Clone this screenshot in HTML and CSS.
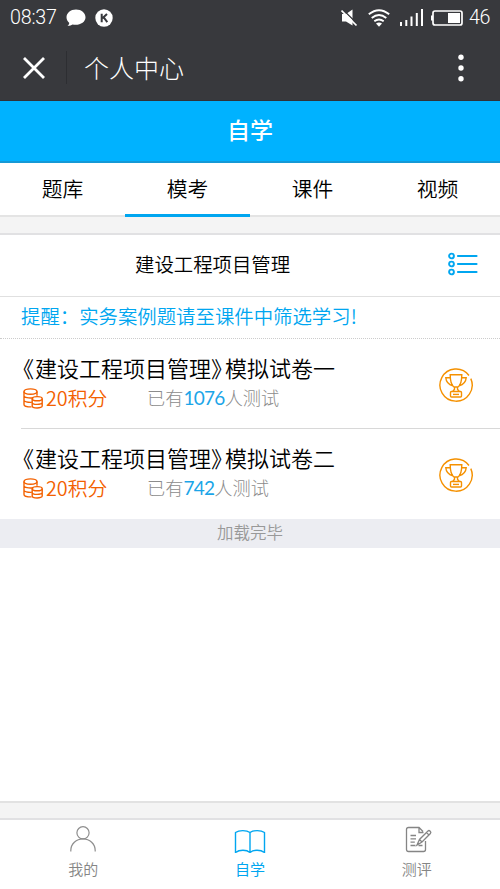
FILE: index.html
```html
<!DOCTYPE html>
<html lang="zh-CN">
<head>
<meta charset="utf-8">
<title>自学</title>
<link rel="stylesheet" href="styles.css">
</head>
<body>
<div class="status">
  <span class="clock">08:37</span>
  <svg class="bubble" width="20" height="18" viewBox="0 0 20 18"><path d="M10 .5C4.600.5.5 4 .5 8.300c0 2.500 1.200 4.300 2.800 5.600-.2 1.200-.9 2.200-1.800 2.900 2 .1 3.800-.5 5-1.300 6.600 1.400 13-1.800 13-7.200C19.500 4 15.400.5 10 .5z" fill="#fff"/></svg>
  <svg class="kbadge" width="18" height="18" viewBox="0 0 18 18"><circle cx="9" cy="9" r="8.700" fill="#fff"/><path d="M6.700 4.800v8.400M12 5l-4.600 4.300M8.500 8.200l3.800 5" stroke="#38393d" stroke-width="2" fill="none"/></svg>
  <svg class="mute" width="17" height="18" viewBox="0 0 17 18"><path d="M1 5h4L11.500 .5v16L5 12.500H1z" fill="#fff"/><path d="M1.500 .3L17 15.500" stroke="#38393d" stroke-width="1.300"/><path d="M.5 1.500L15.500 16.500" stroke="#fff" stroke-width="1.700"/></svg>
  <svg class="wifi" width="22" height="18" viewBox="0 0 22 18" fill="none" stroke="#fff" stroke-width="1.900"><path d="M.8 5.300Q11-3 21.200 5.300M3.700 8.900q7.300-5.700 14.600 0M6.300 12.300q4.700-3.600 9.400 0"/><path d="M8 14.500q3-2 6 0L11 17.700z" fill="#fff" stroke="none"/></svg>
  <svg class="signal" width="24" height="18" viewBox="0 0 24 18" fill="#fff"><path d="M0 13h2v4H0zM5.300 11h2v6h-2zM10.500 7.500h2V17h-2zM15.800 4h2v13h-2zM21 0h2v17h-2z"/></svg>
  <svg class="battery" width="32" height="18" viewBox="0 0 32 18"><rect x="2" y="2" width="29" height="14" rx="2" fill="none" stroke="#fff" stroke-width="1.700"/><path d="M0 6.500h2v5H0zM17 4h12v10H17z" fill="#fff"/></svg>
  <span class="level">46</span>
</div>
<div class="nav">
  <svg class="close" width="22" height="22" viewBox="0 0 22 22"><path d="M1 1l20 20M21 1L1 21" stroke="#fff" stroke-width="2.800"/></svg>
  <span class="nav-title">个人中心</span>
  <svg class="more" width="6" height="28" viewBox="0 0 6 28" fill="#fff"><circle cx="3" cy="3.300" r="2.700"/><circle cx="3" cy="14" r="2.700"/><circle cx="3" cy="24.700" r="2.700"/></svg>
</div>
<h1 class="header">自学</h1>
<div class="tabs">
  <span class="tab">题库</span><span class="tab active">模考</span><span class="tab">课件</span><span class="tab">视频</span>
</div>
<div class="gap"></div>
<div class="subject">
  <span class="subject-name">建设工程项目管理</span>
  <svg class="list" width="30" height="24" viewBox="0 0 30 24" fill="none" stroke="#00a6f0" stroke-width="1.900"><circle cx="3.500" cy="4" r="2.400"/><circle cx="3.500" cy="12" r="2.400"/><circle cx="3.500" cy="20" r="2.400"/><path d="M10 4h18.500M10 12h18.500M10 20h18.500" stroke-width="2.200" stroke-linecap="round"/></svg>
</div>
<div class="notice">提醒：实务案例题请至课件中筛选学习!</div>
<div class="paper">
  <div class="paper-text">
    <div class="paper-name"><span class="open">《</span>建设工程项目管理<span class="shut">》</span>模拟试卷一</div>
    <div class="meta">
      <svg class="coins" width="20" height="21" viewBox="0 0 20 21"><use href="#coins"/></svg>
      <span class="points">20积分</span>
      <span class="count">已有<b>1076</b>人测试</span>
    </div>
  </div>
  <svg class="cup" width="34" height="34" viewBox="0 0 34 34"><use href="#cup"/></svg>
</div>
<div class="paper">
  <div class="paper-text">
    <div class="paper-name"><span class="open">《</span>建设工程项目管理<span class="shut">》</span>模拟试卷二</div>
    <div class="meta">
      <svg class="coins" width="20" height="21" viewBox="0 0 20 21"><use href="#coins"/></svg>
      <span class="points">20积分</span>
      <span class="count">已有<b>742</b>人测试</span>
    </div>
  </div>
  <svg class="cup" width="34" height="34" viewBox="0 0 34 34"><use href="#cup"/></svg>
</div>
<div class="loaded">加载完毕</div>
<div class="blank"></div>
<div class="gap bottom-gap"></div>
<div class="tabbar">
  <div class="item">
    <svg width="28" height="28" viewBox="0 0 28 28" fill="none" stroke="#8e8e8e" stroke-width="1.200"><circle cx="14" cy="7.800" r="6.100"/><path d="M1.800 26.500v-1c0-6.500 5.400-11.600 12.200-11.600s12.200 5.100 12.200 11.600v1"/></svg>
    <span>我的</span>
  </div>
  <div class="item on">
    <svg width="32" height="28" viewBox="0 0 32 28" fill="none" stroke="#00a6f0" stroke-width="1.400"><path d="M16 27.500V7.500C12.500 5 5 5 1.500 7.500v20c4-3 11-3 14.500 0zM16 27.500V7.500C19.500 5 27 5 30.500 7.500v20c-4-3-11-3-14.500 0z"/></svg>
    <span>自学</span>
  </div>
  <div class="item">
    <svg class="exam" width="28" height="28" viewBox="0 0 28 28" fill="none" stroke="#858585" stroke-width="1.300"><path d="M20.500 16v8.500q0 2-2 2h-15q-2 0-2-2v-20q0-2 2-2H14l4 4M14 2.500v5h4.500"/><path d="M5.500 10.500H11M5.500 13.800H11M5.500 17.200h4.300M5.500 20.500h5M13.500 20.500h4"/><path d="M12 20l2.500-5.500L23 6q1-1 2.200.2t.2 2.300L17 17zM14.500 14.500L17 17M21.500 7.500l2.300 2.400"/></svg>
    <span>测评</span>
  </div>
</div>
<svg class="defs" width="0" height="0">
  <defs>
    <g id="coins" fill="none" stroke="#f36100" stroke-width="1.400">
      <ellipse cx="7.500" cy="3.600" rx="6.500" ry="2.700"/>
      <path d="M1 3.600v12.800c0 1.500 3 2.500 7.500 2.500M14 3.600v4.200M1 7.700c0 1.700 5 2.800 9.500 2M1 12.200c0 1.400 3.500 2.300 7.800 2.100"/>
      <ellipse cx="14.200" cy="10.700" rx="5" ry="2.100"/>
      <path d="M9.200 10.700v7.300c0 2.600 10 2.600 10 0v-7.300M9.200 14.400c0 2.600 10 2.600 10 0"/>
    </g>
    <g id="cup" fill="none" stroke="#f59100" stroke-width="1.400">
      <path d="M30 7.500A16.100 16.100 0 1 0 31.800 10.600"/>
      <path d="M11.200 6.800h11.600q0 9.500-3.800 12.200h-4Q11.200 16.300 11.200 6.800zM11.300 9.800H6.800q.5 6.300 7 8M22.700 9.800h4.500q-.5 6.300-7 8M15.500 19v2.200l-1.700 2.300M18.500 19v2.200l1.700 2.300"/>
      <rect x="11.500" y="23.500" width="11" height="5.500" rx="1"/><path d="M14 26.400h6"/>
    </g>
  </defs>
</svg>
</body>
</html>
```
FILE: styles.css
```css
* { box-sizing: border-box; }
body {
  margin: 0; width: 500px; height: 889px; overflow: hidden;
  display: flex; flex-direction: column;
  background: #fff; color: #000;
  font-family: "Noto Sans CJK SC", sans-serif; font-weight: 350;
}
svg { display: block; flex: none; }
.status {
  height: 35px; flex: none; background: #38393d; color: #fff;
  display: flex; align-items: center;
  font: 300 19.700px/35px Roboto, sans-serif;
  padding: 0 10px 0 10px;
}
.clock { width: 56px; letter-spacing: -.2px; }
.kbadge { margin-left: 9px; }
.mute { margin-left: auto; }
.wifi { margin-left: 10px; }
.signal { margin-left: 10px; }
.battery { margin-left: 7px; }
.level { margin-left: 6px; width: 21px; letter-spacing: -.4px; }
.nav {
  height: 66px; flex: none; background: #38393d; color: #fff;
  display: flex; align-items: center; padding: 0 36px 0 23px;
  border-bottom: 1px solid #303238;
}
.nav-title {
  height: 33px; line-height: 32px; font-size: 25px; font-weight: 300;
  margin-left: 21px; padding-left: 17px; border-left: 1px solid #2d2e32;
}
.more { margin-left: auto; }
.header {
  margin: 0; height: 62px; flex: none; background: #00b2ff; color: #fff;
  border-bottom: 2px solid #1599d6;
  font-size: 23px; line-height: 57px; font-weight: 500; text-align: center;
}
.tabs { display: flex; height: 54px; flex: none; }
.tab {
  flex: 1; text-align: center; font-size: 20.800px; line-height: 50px;
  border-bottom: 2px solid #e4e4e4;
}
.tab.active { border-bottom: 3px solid #00a6f0; }
.gap { height: 18px; flex: none; background: #f4f4f4; border-bottom: 2px solid #e1e1e3; }
.subject {
  height: 62px; flex: none; display: flex; align-items: flex-start;
  border-bottom: 1px solid #e0e0e0; padding: 0 22px 0 135px;
}
.subject-name { font-size: 19.400px; line-height: 57px; }
.list { margin-left: auto; margin-top: 17px; }
.notice {
  height: 42px; flex: none; padding-left: 21px; color: #00a6f0;
  font-size: 19.400px; line-height: 38px; white-space: nowrap;
  border-bottom: 1px dotted #ccc;
}
.paper {
  height: 90px; flex: none; margin-left: 21px; padding: 12px 27px 0 0;
  display: flex; justify-content: space-between;
  border-bottom: 1px solid #d8d8d8;
}
.paper + .paper { border-bottom: 0; }
.paper-name { font-size: 22px; line-height: 32px; height: 32px; white-space: nowrap; }
.open, .shut { font-feature-settings: "halt"; margin-right: 3px; }
.open { margin-left: 2px; margin-right: 1px; }
.meta { display: flex; height: 30px; line-height: 28px; align-items: center; }
.coins { margin-left: 2px; }
.points { color: #f36100; font-size: 19.800px; margin-left: 3px; width: 101px; }
.count { color: #8c8c8c; font-size: 18.200px; font-weight: 300; white-space: nowrap; margin-top: -2px; }
.count b { font: 400 19px/1 Lato, sans-serif; color: #1ba5e8; letter-spacing: -.7px; }
.cup { margin-top: 17px; }
.loaded {
  height: 29px; flex: none; background: #ecedf2; color: #999;
  font-size: 16.500px; line-height: 26px; text-align: center;
}
.blank { flex: 1; }
.bottom-gap { border-top: 2px solid #e2e2e2; height: 19px; }
.tabbar { display: flex; height: 69px; flex: none; padding-top: 5px; }
.item {
  flex: 1; display: flex; flex-direction: column; align-items: center;
  font-size: 15px; line-height: 31px; color: #858585;
}
.exam { margin-left: 4px; }
.on { color: #00a6f0; font-weight: 400; }
.defs { position: absolute; }
```
